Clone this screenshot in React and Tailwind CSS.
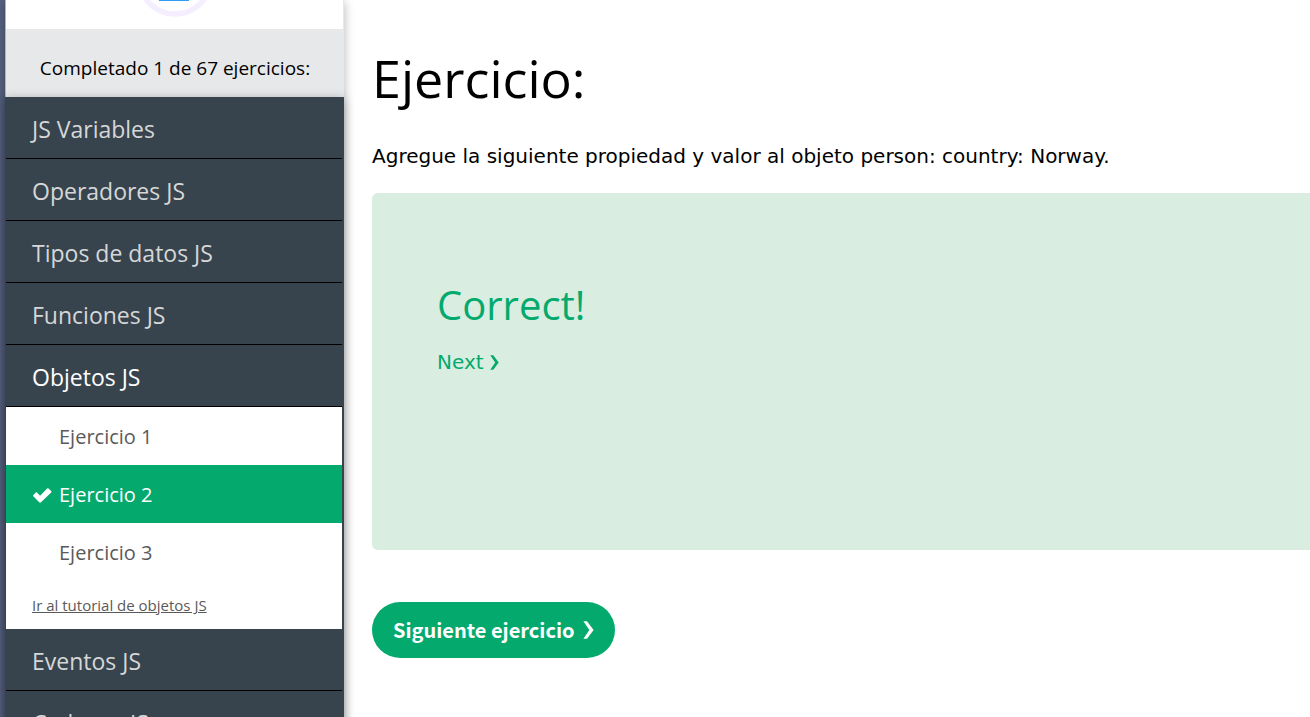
import React from "react";

const topicsBefore = ["JS Variables", "Operadores JS", "Tipos de datos JS", "Funciones JS"];
const exercises = [
  { name: "Ejercicio 1", active: false },
  { name: "Ejercicio 2", active: true },
  { name: "Ejercicio 3", active: false },
];
const topicsAfter = ["Eventos JS", "Cadenas JS"];

function CheckIcon() {
  return (
    <svg viewBox="0 0 20 16" className="h-4 w-5 shrink-0" aria-hidden="true">
      <path
        d="M1.3 8 L3.7 5.6 Q4.3 5.1 4.9 5.6 L8.1 8.7 L15.1 1.5 Q15.8 0.9 16.5 1.5 L19.2 4.1 Q19.8 4.8 19.2 5.4 L9 15.2 Q8.1 15.8 7.2 15.2 L1.3 9.3 Q0.7 8.6 1.3 8 Z"
        fill="currentColor"
      />
    </svg>
  );
}

function Chevron({ className }) {
  return (
    <svg viewBox="0 0 10 17" className={className} aria-hidden="true">
      <path d="M0.2 0.3 H3.6 L9.8 8.5 L3.6 16.7 H0.2 L5.8 8.5 Z" fill="currentColor" />
    </svg>
  );
}

function Topic({ label, open }) {
  return (
    <a
      href="#"
      className={
        open
          ? "flex h-[62px] items-center border-b border-black pt-1 pl-[26px] text-[23px] text-white"
          : "flex h-[62px] items-center border-b border-black pt-1 pl-[26px] text-[23px] text-[#d5d7d8]"
      }
    >
      {label}
    </a>
  );
}

function Sidebar() {
  return (
    <aside className="flex w-[344px] shrink-0 flex-col bg-[#566280] pl-[5px] font-['Open_Sans',sans-serif]">
      <div className="flex grow flex-col bg-[#e7e8ea] shadow-[0_2px_10px_rgba(0,0,0,0.3)]">
        <div className="mr-px flex h-[29px] items-end justify-center overflow-hidden border-l border-[#b0b3ba] bg-white pb-3">
          <svg viewBox="0 0 78 78" className="size-[78px] shrink-0" aria-hidden="true">
            <circle cx="39" cy="39" r="36" fill="#fff" stroke="#f4eeff" strokeWidth="5.5" />
            <rect x="23" y="52" width="30" height="10" fill="#2f9df4" />
          </svg>
        </div>
        <p className="flex h-[68px] items-center justify-center border-l border-[#b0b3ba] pt-2.5 text-[19px] text-black">
          Completado 1 de 67 ejercicios:
        </p>
        <nav className="grow bg-[#38444d] pr-0.5 pl-px shadow-[0_2px_10px_rgba(0,0,0,0.3)]">
          {topicsBefore.map((label) => (
            <Topic key={label} label={label} />
          ))}
          <Topic label="Objetos JS" open />
          <div className="bg-white">
            {exercises.map(({ name, active }) => (
              <a
                key={name}
                href="#"
                className={
                  active
                    ? "flex h-[58px] items-center gap-[7px] bg-[#04aa6d] pt-0.5 pl-[26px] text-[20px] text-white"
                    : "flex h-[58px] items-center pt-0.5 pl-[53px] text-[20px] text-[#5a5a5a]"
                }
              >
                {active && <CheckIcon />}
                <span>{name}</span>
              </a>
            ))}
            <a href="#" className="flex h-12 items-center pl-[26px] text-[15px] text-[#5a5a5a] underline">
              Ir al tutorial de objetos JS
            </a>
          </div>
          {topicsAfter.map((label) => (
            <Topic key={label} label={label} />
          ))}
        </nav>
      </div>
    </aside>
  );
}

export default function App() {
  return (
    <div className="flex h-screen overflow-hidden bg-white text-black">
      <Sidebar />
      <main className="min-w-0 grow pt-10 pl-7 font-['DejaVu_Sans',sans-serif]">
        <h1 className="font-['Open_Sans',sans-serif] text-[52px] leading-[76px]">Ejercicio:</h1>
        <p className="mt-6 text-[20px] leading-8 whitespace-nowrap">
          Agregue la siguiente propiedad y valor al objeto person: country: Norway.
        </p>
        <section className="mt-[21px] h-[357px] rounded-l-md bg-[#d9ede1] pt-[82px] pl-[65px] text-[#04aa6d]">
          <h2 className="font-['Open_Sans',sans-serif] text-[40px] leading-[60px]">Correct!</h2>
          <a href="#" className="mt-3 inline-flex items-center gap-1.5 text-[20px] leading-[30px]">
            Next
            <Chevron className="h-[15px] w-[9px]" />
          </a>
        </section>
        <button
          type="button"
          className="mt-[52px] flex h-14 items-center gap-2 rounded-full bg-[#04aa6d] px-[21px] font-['Noto_Sans_CJK_SC',sans-serif] text-[20px] font-bold text-white"
        >
          Siguiente ejercicio
          <Chevron className="h-[18px] w-[11px]" />
        </button>
      </main>
    </div>
  );
}
